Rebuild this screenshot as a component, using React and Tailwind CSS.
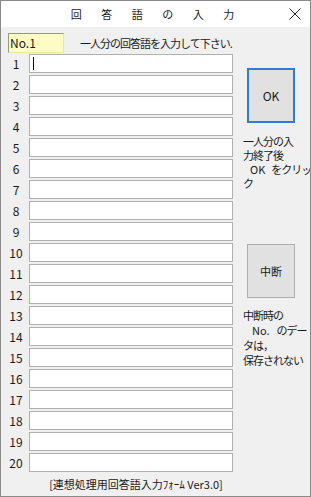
import React from 'react';

const rows = Array.from({ length: 20 }, (_, i) => i + 1);
const titleChars = ['回', '答', '語', 'の', '入', '力'];

const font = { fontFamily: '"Noto Sans CJK JP", "Liberation Sans", sans-serif' };

const App = () => {
  return (
    <div
      className="w-[311px] h-[497px] bg-[#f0f0f0] border border-[#8a8a8a] flex flex-col text-[12px] text-[#1a1a1a] overflow-hidden"
      style={font}
    >
      {/* Title bar */}
      <div className="h-[26px] bg-white flex items-center shrink-0">
        <div className="flex pl-[60px] text-[11px]">
          {titleChars.map((c) => (
            <span key={c} className="w-[30.5px] text-center leading-none">{c}</span>
          ))}
        </div>
        <svg className="ml-auto mr-[9px]" width="12" height="12" viewBox="0 0 12 12">
          <path d="M0.5 0.5 L11.5 11.5 M11.5 0.5 L0.5 11.5" stroke="#222" strokeWidth="1" fill="none" />
        </svg>
      </div>

      {/* Body */}
      <div className="flex flex-1">
        {/* Left column */}
        <div className="flex flex-col w-[232px] shrink-0">
          <div className="flex items-end h-[26px]">
            <div className="ml-[7px] w-[56px] h-[20px] bg-[#fcfcc4] border-t border-l border-[#9a9a80] border-r border-r-[#e8e8a0] border-b border-b-[#e8e8a0] flex items-center pl-[1px] leading-none">
              No.1
            </div>
            <div className="ml-[16px] h-[20px] flex items-center text-[11px] leading-none tracking-[-1px] whitespace-nowrap">
              一人分の回答語を入力して下さい.
            </div>
          </div>
          <div className="flex flex-col gap-[2px] mt-[1px]">
            {rows.map((n) => (
              <div key={n} className="flex items-center h-[19px]">
                <span className="w-[24px] ml-[3px] text-center leading-none">{n}</span>
                <div className="relative ml-[1px] w-[204px] h-[19px] bg-white border border-[#b0b0b0]">
                  {n === 1 && <span className="absolute left-[3px] top-[2px] w-px h-[13px] bg-black" />}
                </div>
              </div>
            ))}
          </div>
          <div className="mt-[7px] text-center pl-[38px] text-[11px] leading-none whitespace-nowrap">
            [連想処理用回答語入力ﾌｫｰﾑ Ver3.0]
          </div>
        </div>

        {/* Right column */}
        <div className="flex flex-col pl-[10px] pt-[41px]">
          <button className="ml-[4px] w-[48px] h-[55px] bg-[#e1e1e1] border-2 border-[#2d7bd4] flex items-center justify-center">
            OK
          </button>
          <div className="mt-[11px] text-[11px] leading-[14px] tracking-[-1px] whitespace-nowrap">
            <div>一人分の入</div>
            <div>力終了後</div>
            <div>
              <span className="ml-[7px] tracking-normal">OK</span>
              <span className="ml-[6px]">をクリッ</span>
            </div>
            <div>ク</div>
          </div>
          <button className="mt-[54px] ml-[4px] w-[48px] h-[54px] bg-[#e1e1e1] border border-[#adadad] flex items-center justify-center text-[11px]">
            中断
          </button>
          <div className="mt-[10px] text-[11px] leading-[15px] tracking-[-1px] whitespace-nowrap">
            <div>中断時の</div>
            <div>
              <span className="ml-[9px] tracking-normal">No.</span>
              <span className="ml-[7px]">のデー</span>
            </div>
            <div>タは，</div>
            <div>保存されない</div>
          </div>
        </div>
      </div>
    </div>
  );
};

export default App;
